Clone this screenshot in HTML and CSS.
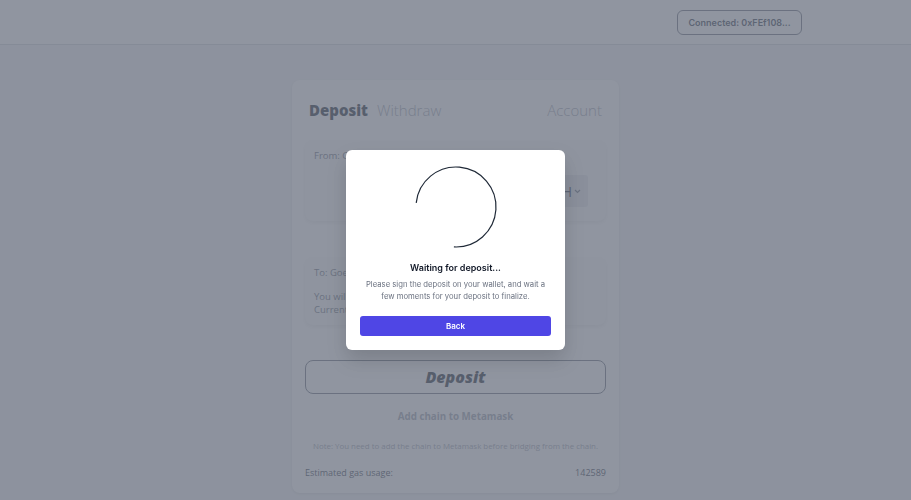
FILE: index.html
```html
<!DOCTYPE html>
<html>
<head>
<meta charset="utf-8">
<link rel="stylesheet" href="styles.css">
</head>
<body>
<header class="topbar">
  <button class="connected">Connected: 0xFEf108...</button>
</header>
<main class="page">
  <section class="card">
    <nav class="tabs">
      <span class="tab active">Deposit</span>
      <span class="tab">Withdraw</span>
      <span class="tab account">Account</span>
    </nav>
    <div class="box from">
      <div class="label">From: Goerli</div>
      <div class="from-row">
        <span class="token">ETH<svg width="7" height="5" viewBox="0 0 7 5"><path d="M1 1l2.5 2.5L6 1" fill="none" stroke="#6b7280" stroke-width="1.2"/></svg></span>
      </div>
    </div>
    <div class="box to">
      <div class="label">To: Goerli Optimism</div>
      <div class="info">You will receive 0.0 ETH<br>Current balance: 0.0 ETH</div>
    </div>
    <button class="deposit-btn">Deposit</button>
    <div class="add-chain">Add chain to Metamask</div>
    <p class="note">Note: You need to add the chain to Metamask before bridging from the chain.</p>
    <div class="gas"><span>Estimated gas usage:</span><span>142589</span></div>
  </section>
</main>
<div class="overlay">
  <div class="modal">
    <svg class="spinner" width="84" height="84" viewBox="-1 -1 84 84"><path d="M1.22 36.82 A40 40 0 1 1 38.9 80.95" fill="none" stroke="#1f2937" stroke-width="1.2"/></svg>
    <h3 class="modal-title">Waiting for deposit...</h3>
    <p class="modal-text">Please sign the deposit on your wallet, and wait a few moments for your deposit to finalize.</p>
    <button class="back-btn">Back</button>
  </div>
</div>
</body>
</html>
```
FILE: styles.css
```css
* { box-sizing: border-box; }
html, body { margin: 0; height: 100%; }
body {
  background: #f3f4f6;
  font-family: "Open Sans", "Liberation Sans", sans-serif;
  color: #1f2937;
  overflow: hidden;
}
.topbar {
  height: 45px;
  background: #fff;
  border-bottom: 1px solid #d1d5db;
  display: flex;
  justify-content: flex-end;
  align-items: center;
  padding-right: 109px;
}
.connected {
  width: 125px;
  height: 25px;
  border: 1px solid #6b7280;
  border-radius: 6px;
  background: #fff;
  font-family: Inter, sans-serif;
  font-size: 9px;
  font-weight: 600;
  color: #374151;
  padding: 0;
}
.page {
  display: flex;
  justify-content: center;
  padding-top: 35px;
}
.card {
  width: 327px;
  background: #fff;
  border-radius: 8px;
  box-shadow: 0 1px 3px rgba(0,0,0,0.1);
  padding: 20px 13px 14px;
}
.tabs {
  display: flex;
  align-items: baseline;
  gap: 9px;
  padding: 0 4px;
  height: 24px;
}
.tab { font-size: 15px; color: #9ca3af; font-weight: 300; }
.tab.active { font-weight: 800; color: #1f2937; }
.tab.account { margin-left: auto; }
.box {
  background: #f9fafb;
  border-radius: 8px;
  box-shadow: 0 2px 4px rgba(0,0,0,0.08);
  padding: 9px 9px;
  font-size: 9.5px;
  color: #6b7280;
}
.from { margin-top: 16px; height: 81px; }
.from-row { display: flex; justify-content: flex-end; align-items: center; margin-top: 13px; }
.token {
  display: flex; align-items: center; gap: 2px;
  background: #e5e7eb;
  height: 32px; padding: 0 7px 0 8px;
  font-size: 14px; color: #374151; border-radius: 3px;
  margin-right: 9px;
}
.to { margin-top: 36px; height: 68px; }
.info { margin-top: 11px; line-height: 13px; }
.deposit-btn {
  display: block;
  width: 100%;
  margin-top: 35px;
  height: 34px;
  background: #fff;
  border: 1px solid #6b7280;
  border-radius: 8px;
  font-family: "Open Sans", sans-serif;
  font-size: 16px;
  font-weight: 800;
  font-style: italic;
  color: #1f2937;
}
.add-chain {
  text-align: center;
  margin-top: 16px;
  font-size: 9.8px;
  font-weight: 700;
  color: #9ca3af;
}
.note {
  text-align: center;
  margin: 18px 0 0;
  font-size: 7.9px;
  color: #9ca3af;
}
.gas {
  display: flex;
  justify-content: space-between;
  margin-top: 15px;
  font-size: 9px;
  color: #374151;
}
.overlay {
  position: fixed;
  inset: 0;
  background: rgba(107,114,128,0.75);
  display: flex;
  align-items: center;
  justify-content: center;
}
.modal {
  width: 219px;
  height: 200px;
  background: #fff;
  border-radius: 6px;
  box-shadow: 0 10px 20px rgba(0,0,0,0.15);
  padding: 16px 14px 14px;
  display: flex;
  flex-direction: column;
  align-items: center;
  font-family: Inter, "Liberation Sans", sans-serif;
}
.spinner { display: block; margin-top: -1px; }
.modal-title {
  margin: 13px 0 0;
  font-size: 9px;
  font-weight: 600;
  color: #111827;
}
.modal-text {
  margin: 6px 0 0;
  font-size: 7.7px;
  line-height: 12px;
  color: #6b7280;
  text-align: center;
}
.back-btn {
  margin-top: auto;
  width: 100%;
  height: 20px;
  border: 0;
  border-radius: 3px;
  background: #4f46e5;
  color: #fff;
  font-family: Inter, sans-serif;
  font-size: 8px;
  font-weight: 600;
}
```
